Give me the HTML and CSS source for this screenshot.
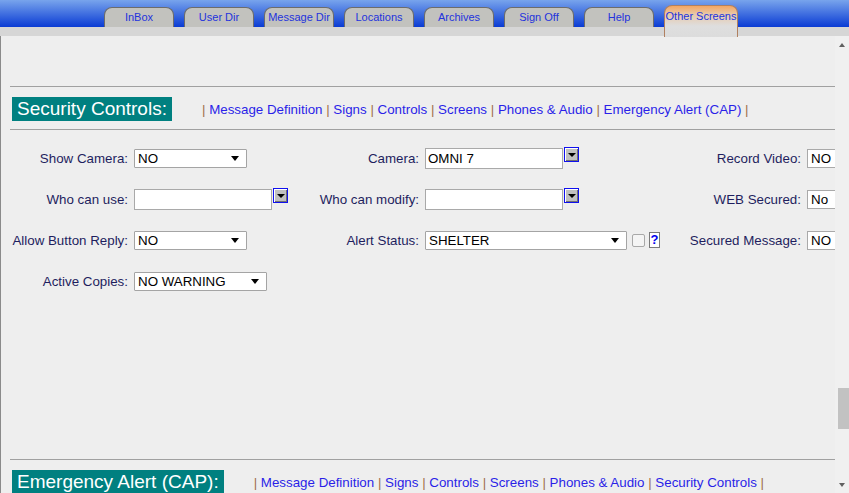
FILE: index.html
```html
<!DOCTYPE html>
<html lang="en">
<head>
    <meta charset="UTF-8">
    <title>Other Screens</title>
    <link rel="stylesheet" href="styles.css">
</head>
<body>
    <div class="tabbar">
        <a class="tab">InBox</a>
        <a class="tab">User Dir</a>
        <a class="tab">Message Dir</a>
        <a class="tab">Locations</a>
        <a class="tab">Archives</a>
        <a class="tab">Sign Off</a>
        <a class="tab">Help</a>
        <a class="tab active">Other Screens</a>
    </div>

    <div class="frame">
        <div class="content">
            <hr class="rule">
            <div class="sec-head">
                <div class="sec-title">Security Controls:</div>
                <div class="links">
                    <span class="sep">|</span> <a>Message Definition</a>
                    <span class="sep">|</span> <a>Signs</a>
                    <span class="sep">|</span> <a>Controls</a>
                    <span class="sep">|</span> <a>Screens</a>
                    <span class="sep">|</span> <a>Phones &amp; Audio</a>
                    <span class="sep">|</span> <a>Emergency Alert (CAP)</a>
                    <span class="sep">|</span>
                </div>
            </div>
            <hr class="rule">

            <div class="form">
                <label>Show Camera:</label>
                <div class="sel w113"><span>NO</span><i class="arr"></i></div>
                <label>Camera:</label>
                <div class="group">
                    <div class="inp w138">OMNI 7</div>
                    <div class="ddbtn"><i class="arr"></i></div>
                </div>
                <label>Record Video:</label>
                <div class="inp small">NO</div>

                <label>Who can use:</label>
                <div class="group">
                    <div class="inp w138"></div>
                    <div class="ddbtn"><i class="arr"></i></div>
                </div>
                <label>Who can modify:</label>
                <div class="group">
                    <div class="inp w138"></div>
                    <div class="ddbtn"><i class="arr"></i></div>
                </div>
                <label>WEB Secured:</label>
                <div class="inp small">No</div>

                <label>Allow Button Reply:</label>
                <div class="sel w113"><span>NO</span><i class="arr"></i></div>
                <label>Alert Status:</label>
                <div class="group mid">
                    <div class="sel w202"><span>SHELTER</span><i class="arr"></i></div>
                    <div class="check"></div>
                    <div class="help">?</div>
                </div>
                <label>Secured Message:</label>
                <div class="inp small">NO</div>

                <label>Active Copies:</label>
                <div class="sel w133"><span>NO WARNING</span><i class="arr"></i></div>
            </div>

            <hr class="rule">
            <div class="sec-head">
                <div class="sec-title">Emergency Alert (CAP):</div>
                <div class="links">
                    <span class="sep">|</span> <a>Message Definition</a>
                    <span class="sep">|</span> <a>Signs</a>
                    <span class="sep">|</span> <a>Controls</a>
                    <span class="sep">|</span> <a>Screens</a>
                    <span class="sep">|</span> <a>Phones &amp; Audio</a>
                    <span class="sep">|</span> <a>Security Controls</a>
                    <span class="sep">|</span>
                </div>
            </div>
        </div>

        <div class="scrollbar">
            <div class="sb-btn"><i class="sb-up"></i></div>
            <div class="sb-track"><div class="sb-thumb"></div></div>
            <div class="sb-btn"><i class="sb-down"></i></div>
        </div>
    </div>
</body>
</html>
```

FILE: styles.css
```css
body {
    margin: 0;
    background-color: #eeeeee;
    font-family: "Liberation Sans", Arial, sans-serif;
    font-size: 13.33px;
    overflow: hidden;
}

/* barra de pestañas */
.tabbar {
    display: flex;
    align-items: flex-start;
    gap: 10px;
    height: 36px;
    box-sizing: border-box;
    padding: 7px 0 0 104px;
    background: linear-gradient(to bottom, #78a4ec 0, #0a3bd4 27px, #d6d6d6 27px, #d6d6d6 100%);
}
.tab {
    width: 68px;
    height: 19px;
    line-height: 19px;
    text-align: center;
    font-size: 11px;
    color: #2233dd;
    background-color: #c2c2be;
    border: 1px solid #6c6c6c;
    border-bottom: none;
    border-radius: 8px 8px 0 0;
}
.tab.active {
    width: 72px;
    margin-top: -2px;
    height: 31px;
    line-height: 21px;
    border-color: #b08060;
    background: linear-gradient(to bottom, #f5a660 0, #e8c8a8 8px, #dedede 20px, #dcdcdc 100%);
}

/* marco con scroll */
.frame {
    display: flex;
    height: 457px;
    border-left: 1px solid #8a8a8a;
}
.content {
    flex: 1;
    overflow: hidden;
    padding: 50px 0 0 9px;
}
.rule {
    margin: 0;
    border: none;
    border-top: 1px solid #a0a0a0;
}
.sec-head {
    display: flex;
    align-items: center;
    gap: 30px;
    margin: 10px 0 8px 2px;
}
.sec-title {
    background-color: #008080;
    color: #ffffff;
    font-size: 19px;
    line-height: 24px;
    padding: 0 5px;
    white-space: nowrap;
}
.links {
    white-space: nowrap;
}
.links a {
    color: #2a1fe8;
}
.sep {
    color: #a0704a;
}

/* formulario */
.form {
    display: grid;
    grid-template-columns: 118px 160px 119px 235px 135px 1fr;
    grid-auto-rows: 21px;
    column-gap: 6px;
    row-gap: 20px;
    align-items: center;
    margin: 18px 0 167px 0;
}
.form label {
    text-align: right;
    color: #1e1e5e;
    white-space: nowrap;
}
.group {
    display: flex;
    align-items: flex-start;
    gap: 1px;
    height: 21px;
}
.group.mid {
    align-items: center;
    gap: 0;
}
.inp {
    box-sizing: border-box;
    height: 21px;
    line-height: 19px;
    padding-left: 2px;
    background-color: #ffffff;
    border: 1px solid #a9a9a9;
    color: #000000;
}
.inp.small {
    width: 40px;
    height: 19px;
    line-height: 17px;
    padding-left: 3px;
}
.sel {
    box-sizing: border-box;
    display: flex;
    align-items: center;
    justify-content: space-between;
    height: 19px;
    padding: 0 7px 0 3px;
    background-color: #ffffff;
    border: 1px solid #a4a4a4;
    border-radius: 1px;
    color: #000000;
}
.w113 { width: 113px; }
.w133 { width: 133px; }
.w138 { width: 138px; }
.w202 { width: 202px; }
.arr {
    width: 0;
    height: 0;
    border-left: 4px solid transparent;
    border-right: 4px solid transparent;
    border-top: 5px solid #000000;
}
.ddbtn {
    box-sizing: border-box;
    display: flex;
    align-items: center;
    justify-content: center;
    width: 15px;
    height: 15px;
    margin-top: -1px;
    border: 1px solid #1010ee;
    background-color: #c0c0c0;
    box-shadow: inset 1px 1px #ffffff, inset -1px -1px #707070;
}
.ddbtn .arr {
    border-top-width: 4px;
}
.check {
    width: 11px;
    height: 11px;
    margin-left: 5px;
    border: 1px solid #a8a8a8;
    border-radius: 2px;
    background-color: #f4f4f4;
}
.help {
    box-sizing: border-box;
    width: 11px;
    height: 16px;
    margin: -2px 0 0 4px;
    border: 1px solid #7a7a7a;
    background-color: #ffffff;
    color: #0000ee;
    font-weight: bold;
    font-size: 13px;
    line-height: 14px;
    text-align: center;
}

/* barra de scroll falsa */
.scrollbar {
    display: flex;
    flex-direction: column;
    width: 14px;
    background-color: #f0f0f0;
}
.sb-btn {
    display: flex;
    align-items: center;
    justify-content: center;
    height: 17px;
}
.sb-track {
    flex: 1;
}
.sb-thumb {
    margin: 335px 0 0 3px;
    height: 41px;
    background-color: #c2c2c2;
}
.sb-up, .sb-down {
    width: 0;
    height: 0;
    border-left: 3px solid transparent;
    border-right: 3px solid transparent;
}
.sb-up {
    border-bottom: 4px solid #606060;
}
.sb-down {
    border-top: 4px solid #606060;
}
```
